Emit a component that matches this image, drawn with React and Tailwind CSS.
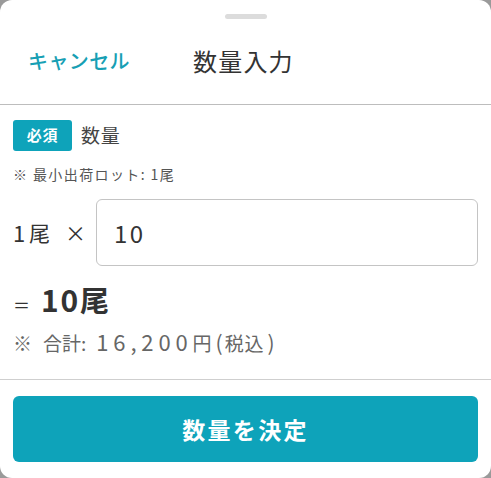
import React from 'react';

const QuantitySheet = () => {
  return (
    <div className="min-h-screen bg-[#9a9a9a]" style={{ fontFamily: '"Noto Sans CJK JP", "Noto Sans", sans-serif' }}>
      <div className="h-[478px] w-[491px] bg-white rounded-[12px] flex flex-col">
        <div className="flex justify-center pt-[14px]">
          <div className="h-[5px] w-[42px] rounded-full bg-[#dcdcdc]" />
        </div>
        <div className="flex items-center h-[85px] pb-[2px]">
          <button className="ml-[28px] text-[20px] text-[#179fb4] font-medium tracking-[0.02em]">キャンセル</button>
          <h1 className="ml-[63px] text-[24px] text-[#333] tracking-[0.05em]">数量入力</h1>
        </div>
        <div className="h-px bg-[#bdbdbd]" />
        <div className="px-[13px] pt-[15px] flex-1 flex flex-col">
          <div className="flex items-center gap-[9px]">
            <span className="h-[31px] w-[59px] justify-center flex items-center rounded-[3px] bg-[#0ea3ba] text-white text-[15px] font-bold tracking-[0.05em]">必須</span>
            <span className="text-[19px] text-[#444] tracking-[0.04em]">数量</span>
          </div>
          <p className="mt-[13px] text-[14px] text-[#555] tracking-[0.1em]">※ 最小出荷ロット: 1尾</p>
          <div className="mt-[14px] flex items-center">
            <div className="w-[83px] flex items-center text-[#333]">
              <span className="text-[22px] tracking-[0.04em]">1</span>
              <span className="text-[21px] ml-[3px]">尾</span>
              <span className="text-[21px] ml-[15px]">×</span>
            </div>
            <div className="flex-1 h-[67px] border border-[#c4c4c4] rounded-[6px] flex items-center px-[17px]">
              <span className="text-[24px] text-[#333] tracking-[0.1em]">10</span>
            </div>
          </div>
          <div className="mt-[11px] flex items-baseline">
            <span className="text-[17px] text-[#333] w-[28px]">＝</span>
            <span className="text-[30px] font-bold text-[#333] tracking-[0.06em]">10</span>
            <span className="text-[29px] font-bold text-[#333]">尾</span>
          </div>
          <p className="mt-[3px] text-[19px] text-[#666] flex items-baseline whitespace-nowrap">
            <span>※</span>
            <span className="ml-[11px]">合計:</span>
            <span className="ml-[10px] text-[22px] tracking-[0.22em]">16,200</span>
            <span>円</span>
            <span className="ml-[4px] text-[21px]">(</span>
            <span className="ml-[2px] tracking-[0.05em]">税込</span>
            <span className="ml-[3px] text-[21px]">)</span>
          </p>
        </div>
        <div className="h-px bg-[#cfcfcf]" />
        <div className="px-[13px] pt-[16px] pb-[16px]">
          <button className="w-full h-[66px] rounded-[6px] bg-[#0ea3ba] text-white text-[23px] font-bold tracking-[0.1em]">数量を決定</button>
        </div>
      </div>
    </div>
  );
};

export default QuantitySheet;
